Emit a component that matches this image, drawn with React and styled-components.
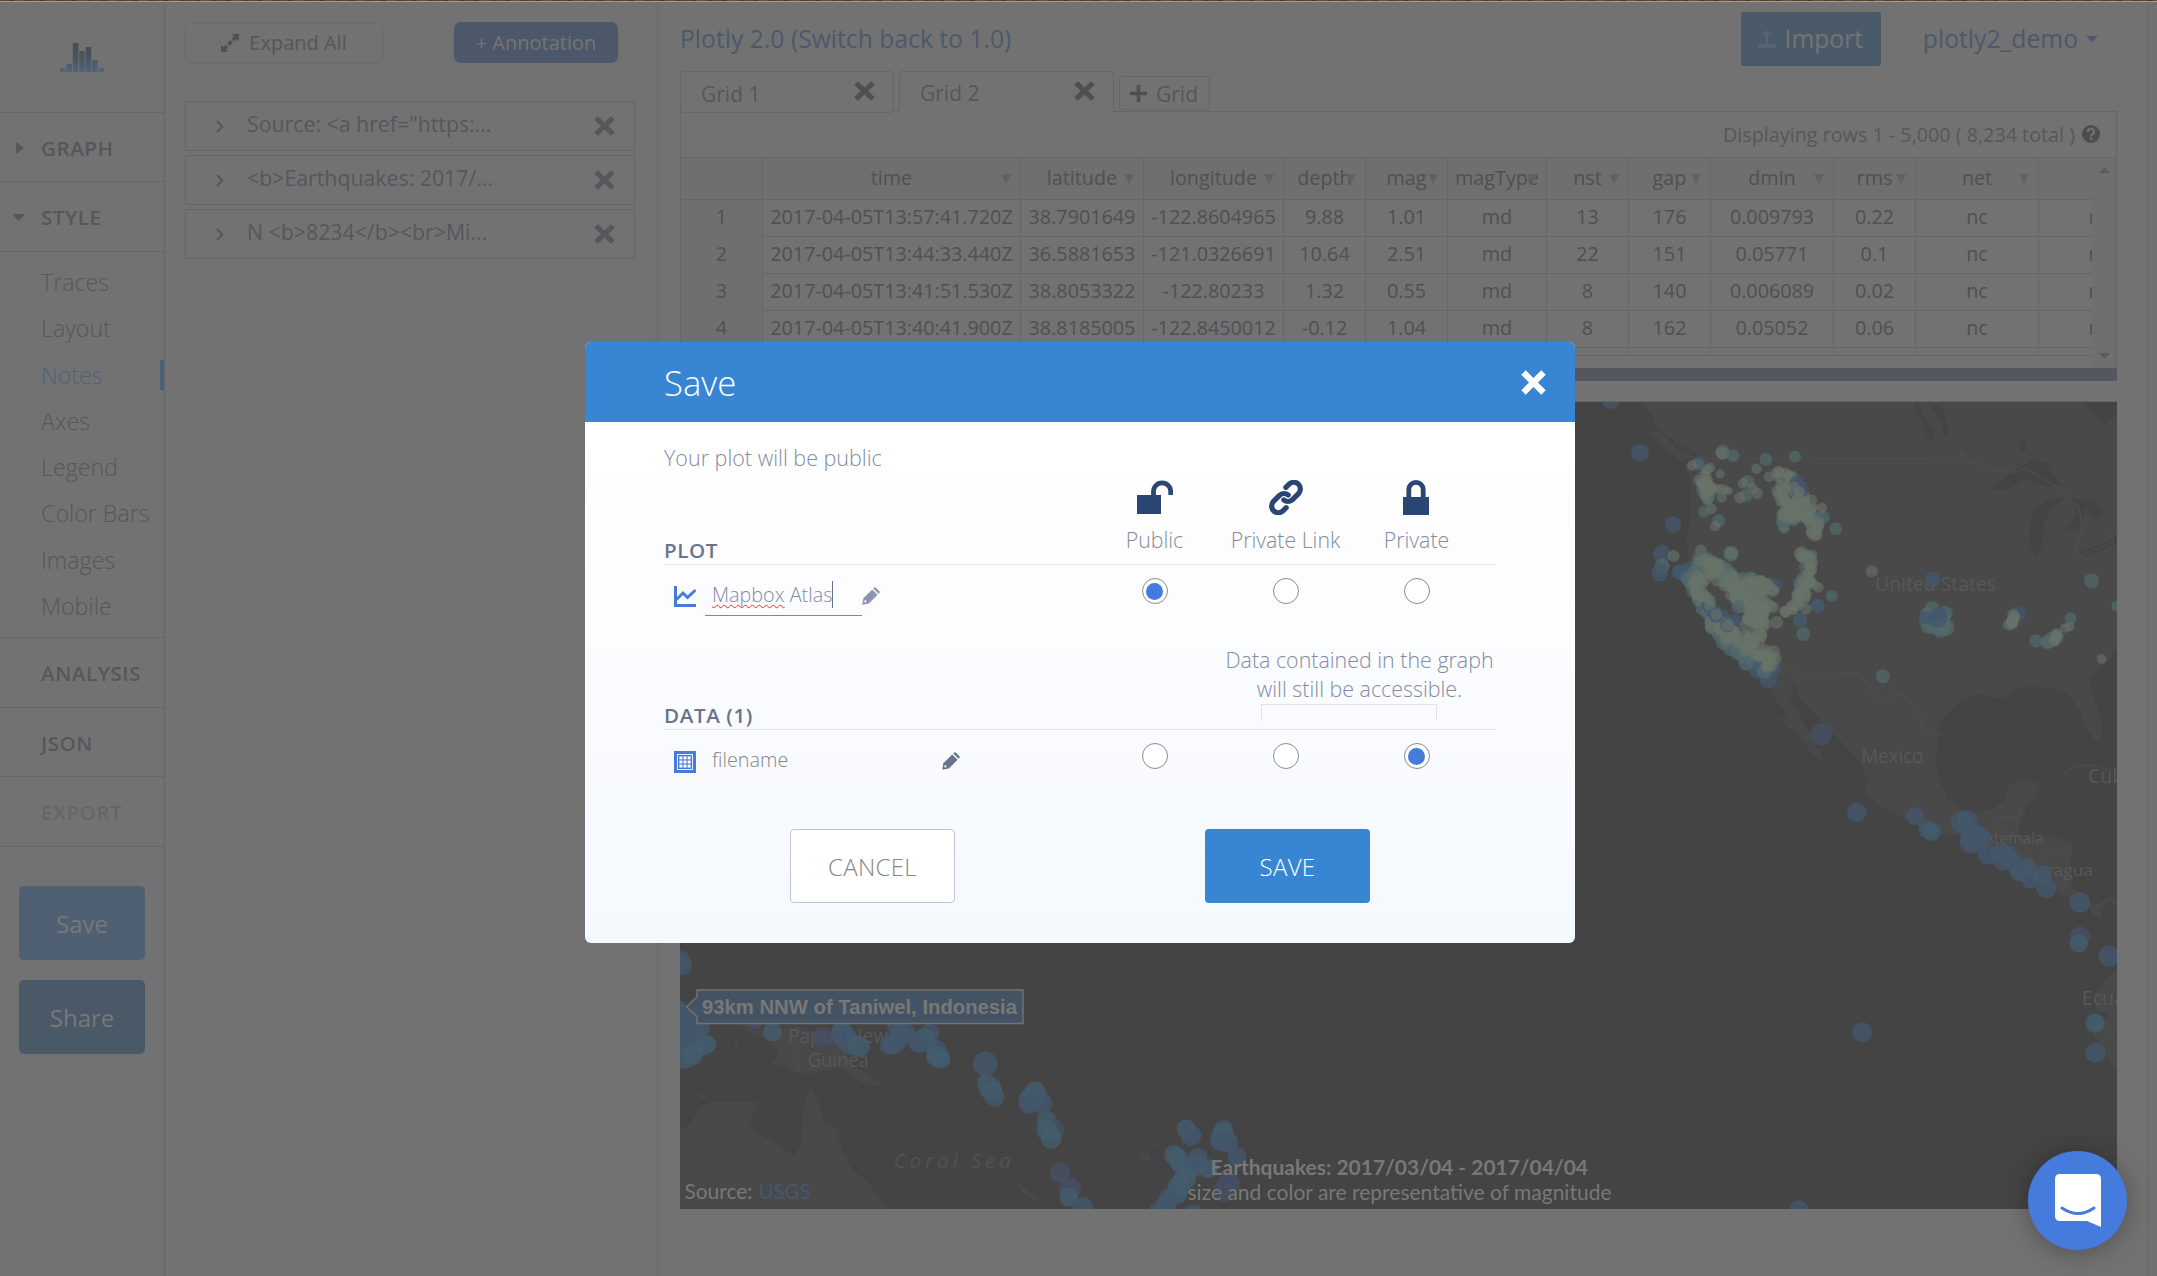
import React from "react";
import styled, { createGlobalStyle, css } from "styled-components";

const SANS = '"Open Sans", "Noto Sans", sans-serif';

const c = {
  page: "#727272",
  line: "#65666a",
  soft: "#686868",
  ink: "#55575c",
  text: "#4f5052",
  light: "#5c5d62",
  blueText: "#4b596b",
  water: "#444444",
  land: "#494949",
  modalBlue: "#3885d3",
  slate: "#69738c",
  slateLight: "#828ba3",
  navy: "#2a4675",
  icon: "#447bdc",
};

const GlobalStyle = createGlobalStyle`
  * { box-sizing: border-box; }
  html, body { margin: 0; padding: 0; }
  body { background: ${c.page}; font-family: ${SANS}; overflow: hidden; }
  button { font-family: inherit; padding: 0; border: 0; margin: 0; }
`;

/* ---------- shell ---------- */
const Page = styled.div`
  position: relative;
  width: 2157px;
  height: 1276px;
  overflow: hidden;
  background: ${c.page};
  display: flex;
  flex-direction: column;
`;
const TopStrip = styled.div`
  height: 2px;
  flex: none;
  background: repeating-linear-gradient(90deg, #5c4630 0 9px, #463522 9px 14px, #64503a 14px 25px, #4e3c29 25px 31px);
  border-bottom: 1px solid #a39a9a;
  && { box-sizing: border-box; }
`;
const Columns = styled.div`
  flex: 1;
  padding-top: 1px;
  display: grid;
  grid-template-columns: 165px 490px 5px 1487px 10px;
  min-height: 0;
`;

/* ---------- sidebar ---------- */
const Sidebar = styled.nav`
  border-right: 1px solid ${c.line};
  display: flex;
  flex-direction: column;
`;
const LogoBox = styled.div`
  height: 110px;
  padding: 40px 0 0 60px;
  border-bottom: 1px solid ${c.line};
`;
const Section = styled.div`
  height: ${(p) => p.$h}px;
  border-bottom: 1px solid ${c.line};
  padding: 1px 0 0 16px;
  display: flex;
  align-items: center;
  font-size: 20.6px;
  letter-spacing: 0.55px;
  font-weight: 600;
  color: ${(p) => (p.$muted ? "#65666b" : c.ink)};
`;
const Marker = styled.span`
  width: 25px;
  height: 14px;
  flex: none;
  display: flex;
  align-items: center;
  margin-left: ${(p) => (p.$down ? "-4px" : "0")};
  margin-right: ${(p) => (p.$down ? "4px" : "0")};
`;
const SubMenu = styled.div`
  height: 386px;
  padding-top: 7px;
  border-bottom: 1px solid ${c.line};
`;
const SubItem = styled.div`
  height: 46.25px;
  padding-left: 41px;
  display: flex;
  align-items: center;
  justify-content: space-between;
  font-size: 23.2px;
  font-weight: 300;
  white-space: nowrap;
  color: ${(p) => (p.$active ? "#50617a" : c.ink)};
`;
const ActiveBar = styled.span`
  width: 4px;
  height: 30px;
  background: #4c5f72;
`;
const SideActions = styled.div`
  padding: 39px 19px 0 19px;
  display: flex;
  flex-direction: column;
  gap: 20px;
`;
const SideButton = styled.button`
  height: 74px;
  border-radius: 5px;
  background: ${(p) => (p.$dark ? "#4a5968" : "#4e6071")};
  color: #777879;
  font-size: 24px;
`;

/* ---------- annotation panel ---------- */
const Panel = styled.section`
  padding: 19px 20px 0 20px;
`;
const PanelTop = styled.div`
  display: flex;
  justify-content: space-between;
  height: 41px;
  padding-right: 17px;
`;
const PanelButton = styled.button`
  width: ${(p) => p.$w}px;
  border-radius: 7px;
  font-size: 20px;
  display: flex;
  align-items: center;
  justify-content: center;
  gap: 10px;
  ${(p) =>
    p.$filled
      ? css`background: #4d576a; color: #747576;`
      : css`background: transparent; border: 1px solid #6c6c6c; color: #565656;`}
`;
const NoteList = styled.div`
  margin-top: 38px;
  display: flex;
  flex-direction: column;
  gap: 4px;
`;
const Note = styled.div`
  height: 50px;
  border: 1px solid ${c.line};
  padding: 0 19px 0 30px;
  display: flex;
  align-items: center;
  color: ${c.ink};
  font-size: 21.3px;
`;
const NoteText = styled.span`
  flex: 1;
  margin-left: 23px;
  padding-bottom: 6px;
  white-space: nowrap;
`;
const Gutter = styled.div`
  margin-top: -1px;
  background: #6e6e6e;
`;
const RightEdge = styled.div`
  border-left: 1px solid #676767;
  background: #707070;
`;

/* ---------- workspace ---------- */
const Workspace = styled.main`
  padding-left: 20px;
  padding-right: 30px;
  display: flex;
  flex-direction: column;
`;
const TitleBar = styled.header`
  height: 68px;
  flex: none;
  padding-right: 19px;
  display: flex;
  align-items: flex-start;
  color: ${c.blueText};
  font-size: 24.7px;
  line-height: 34px;
`;
const TitleText = styled.div`
  flex: 1;
  margin-top: 19px;
`;
const ImportButton = styled.button`
  margin-top: 9px;
  width: 140px;
  height: 54px;
  border-radius: 3px;
  background: #4a5a69;
  color: #737576;
  font-size: 24.7px;
  line-height: 34px;
  display: flex;
  align-items: center;
  justify-content: center;
  gap: 8px;
`;
const Account = styled.div`
  margin: 19px 0 0 42px;
  display: flex;
  align-items: center;
  gap: 8px;
`;
const Tabs = styled.div`
  height: 41px;
  flex: none;
  display: flex;
  color: #575757;
  font-size: 21px;
`;
const Tab = styled.div`
  width: ${(p) => p.$w}px;
  height: ${(p) => (p.$active ? 41 : 42)}px;
  border: 1px solid ${c.line};
  border-bottom-color: ${(p) => (p.$active ? c.page : c.line)};
  border-radius: ${(p) => (p.$active ? "4px 4px 0 0" : "4px")};
  margin-right: 5px;
  padding: 3px 18px 0 20px;
  display: flex;
  align-items: center;
  justify-content: space-between;
  background: ${c.page};
  z-index: 1;
`;
const CloseSlot = styled.span`
  display: flex;
  margin-top: -5px;
`;
const AddTab = styled.div`
  margin-top: 5px;
  width: 91px;
  height: 34px;
  border: 1px solid ${c.line};
  border-radius: 3px;
  padding: 1px 0 0 10px;
  display: flex;
  align-items: center;
  gap: 9px;
`;
const GridBox = styled.div`
  height: 257px;
  flex: none;
  margin-top: -1px;
  border: 1px solid ${c.line};
  border-bottom: 0;
  position: relative;
  display: flex;
  flex-direction: column;
`;
const GridInfo = styled.div`
  height: 46px;
  flex: none;
  border-bottom: 1px solid ${c.line};
  padding: 0 16px 1px 0;
  display: flex;
  align-items: center;
  justify-content: flex-end;
  gap: 7px;
  font-size: 19.75px;
  color: #575757;
`;
const GridScroll = styled.div`
  flex: 1;
  display: flex;
`;
const Cells = styled.div`
  width: 1411px;
  height: 198px;
  overflow: hidden;
  border-bottom: 1px solid ${c.line};
`;
const Row = styled.div`
  display: grid;
  grid-template-columns: 82px 258px 123px 140px 82px 82px 99px 82px 82px 123px 82px 123px 53px;
  height: ${(p) => (p.$head ? 42 : 37)}px;
  ${(p) => p.$head && css`background: #6f6f6f;`}
`;
const Cell = styled.div`
  position: relative;
  border-right: 1px solid ${c.line};
  border-bottom: 1px solid ${c.line};
  display: flex;
  align-items: center;
  justify-content: center;
  font-size: 19.75px;
  color: ${c.text};
  white-space: nowrap;
  overflow: hidden;
  padding-bottom: ${(p) => (p.$head ? 2 : 3)}px;
  &:first-child { background: #6f6f6f; ${(p) => !p.$head && css`border-bottom-color: #6f6f6f;`} }
  &:last-child { border-right: 0; justify-content: flex-start; padding-left: 49.5px; }
`;
const SortMark = styled.svg`
  position: absolute;
  right: 9px;
  top: 16px;
`;
const ScrollTrack = styled.div`
  flex: 1;
  background: #6f6f6f;
  display: flex;
  flex-direction: column;
  justify-content: space-between;
  align-items: center;
  padding: 9px 0 9px;
`;
const Divider = styled.div`
  height: 13px;
  flex: none;
  background: #545760;
`;
const MapFrame = styled.div`
  margin-top: 20px;
  height: 808px;
  flex: none;
  border-top: 1px solid #656565;
`;

/* ---------- modal ---------- */
const Modal = styled.div`
  position: absolute;
  left: 585px;
  top: 342px;
  width: 990px;
  height: 601px;
  border-radius: 6px;
  overflow: hidden;
  background: linear-gradient(#ffffff 80px, #fdfdfe 220px, #f4f9fe);
  color: ${c.slateLight};
  font-weight: 300;
`;
const ModalHead = styled.div`
  height: 80px;
  padding: 0 29px 0 79px;
  background: ${c.modalBlue};
  color: #fff;
  font-size: 34.7px;
  display: flex;
  align-items: center;
  justify-content: space-between;
`;
const ModalBody = styled.div`
  padding: 21px 79px 0;
  font-size: 21.5px;
`;
const Intro = styled.div`
  height: 30px;
  line-height: 30px;
`;
const GroupHead = styled.div`
  height: ${(p) => p.$h}px;
  border-bottom: 1px solid #e2e5e9;
  display: flex;
  align-items: flex-end;
`;
const GroupTitle = styled.div`
  flex: 1;
  height: 28px;
  line-height: 28px;
  font-size: 20.6px;
  letter-spacing: 0.6px;
  font-weight: 600;
  color: ${c.slate};
`;
const Options = styled.div`
  display: grid;
  grid-template-columns: repeat(3, 131px);
  justify-items: center;
  padding-right: 14px;
`;
const Option = styled.div`
  height: 92px;
  padding-top: 8px;
  display: flex;
  flex-direction: column;
  align-items: center;
  gap: 10px;
  line-height: 30px;
  font-size: 21.3px;
  white-space: nowrap;
`;
const ItemRow = styled.div`
  height: ${(p) => p.$h}px;
  display: flex;
  align-items: flex-start;
  padding-left: 10px;
`;
const IconSlot = styled.div`
  padding-top: 21px;
  width: 31px;
  display: flex;
`;
const NameField = styled.div`
  width: ${(p) => p.$w}px;
  height: 51px;
  padding: 15px 0 0 7px;
  line-height: 30px;
  font-size: 19.8px;
  border-bottom: 1px solid ${(p) => (p.$editing ? "#7d88a8" : "transparent")};
  color: ${(p) => (p.$editing ? c.slateLight : "#858585")};
  display: flex;
  white-space: pre;
`;
const Misspelt = styled.span`
  text-decoration: underline wavy #ff2a2a 1px;
  text-decoration-skip-ink: none;
  text-underline-offset: 2px;
`;
const Caret = styled.span`
  width: 1px;
  height: 27px;
  margin-top: 1px;
  background: ${c.slate};
`;
const Pencil = styled.svg`
  margin-top: 22px;
  flex: none;
`;
const RadioGroup = styled(Options)`
  margin-left: auto;
  padding-top: 13px;
`;
const Radio = styled.span`
  width: 26px;
  height: 26px;
  border-radius: 50%;
  border: 1px solid #8b8b8b;
  background: #fff;
  display: flex;
  align-items: center;
  justify-content: center;
  &::after {
    content: "";
    width: 17px;
    height: 17px;
    border-radius: 50%;
    background: ${(p) => (p.$on ? c.icon : "transparent")};
  }
`;
const Notice = styled.div`
  width: 273px;
  height: 84px;
  line-height: 29.3px;
  font-size: 21.4px;
  text-align: center;
  white-space: nowrap;
`;
const Bracket = styled.div`
  width: 176px;
  height: 17px;
  margin-left: 38px;
  border: 1px solid #dfe3e6;
  border-bottom: 0;
`;
const Footer = styled.div`
  margin-top: 47px;
  padding: 0 126px;
  display: flex;
  justify-content: space-between;
`;
const ModalButton = styled.button`
  width: 165px;
  height: 74px;
  border-radius: 4px;
  font-size: 24px;
  letter-spacing: 0.3px;
  font-weight: 300;
  background: ${(p) => (p.$primary ? c.modalBlue : "#fff")};
  color: ${(p) => (p.$primary ? "#fff" : "#858585")};
  border: ${(p) => (p.$primary ? "0" : "1px solid #c2c4cf")};
`;
const Messenger = styled.div`
  position: absolute;
  left: 2028px;
  top: 1151px;
  width: 99px;
  height: 99px;
  border-radius: 50%;
  background: #457bdd;
  box-shadow: 0 2px 24px rgba(0, 0, 0, 0.3);
  display: flex;
  align-items: center;
  justify-content: center;
`;

/* ---------- small drawings ---------- */
const Cross = ({ w = 21, h = 20, color = c.ink, t = 5 }) => (
  <svg width={w} height={h} viewBox="0 0 20 20" preserveAspectRatio="none">
    <path d="M2 2 18 18M18 2 2 18" stroke={color} strokeWidth={t} />
  </svg>
);
const Tri = ({ dir, w, h, color }) => (
  <svg width={w} height={h} viewBox="0 0 10 10" preserveAspectRatio="none">
    <path d={dir === "down" ? "M0 0H10L5 10Z" : dir === "up" ? "M0 10H10L5 0Z" : "M0 0V10L10 5Z"} fill={color} />
  </svg>
);
const Logo = () => (
  <svg width="44" height="29" viewBox="0 0 44 29">
    <defs>
      <linearGradient id="lg" x1="0" y1="0" x2="0" y2="29" gradientUnits="userSpaceOnUse">
        <stop offset="0" stopColor="#484c54" />
        <stop offset="0.5" stopColor="#4b535e" />
        <stop offset="1" stopColor="#506679" />
      </linearGradient>
    </defs>
    {[[0, 4], [6.4, 8], [12.8, 29], [19.2, 21], [25.6, 25], [32, 12], [38.4, 4]].map(([x, h]) => (
      <rect key={x} x={x} y={29 - h} width="5.6" height={h} fill="url(#lg)" />
    ))}
  </svg>
);
const Expand = () => (
  <svg width="18" height="18" viewBox="0 0 18 18" fill="#515151">
    <path d="M10.8 0H18V7.2L15.8 5 13.4 7.4 10.6 4.6 13 2.2ZM7.2 18H0V10.8L2.2 13 4.6 10.6 7.4 13.4 5 15.8Z" />
    <path d="M6 9.3 9.3 6 12 8.7 8.7 12Z" />
  </svg>
);
const Unlocked = () => (
  <svg width="36" height="35" viewBox="0 0 36 35">
    <path d="M0 15H24V34H0Z" fill={c.navy} />
    <path d="M16.5 16V11.5A8.6 8.6 0 0 1 33.7 11.5V15" fill="none" stroke={c.navy} strokeWidth="4.8" />
  </svg>
);
const Locked = () => (
  <svg width="26" height="35" viewBox="0 0 26 35">
    <path d="M0 17H26V35H0Z" fill={c.navy} />
    <path d="M5.8 18V9.6A7.2 7.2 0 0 1 20.2 9.6V18" fill="none" stroke={c.navy} strokeWidth="4.8" />
  </svg>
);
const Chain = () => (
  <svg width="34" height="35" viewBox="448 45 101 105" fill="none" strokeLinecap="round">
    <path d="M499 128 490 137A19.5 19.5 0 0 1 461 109L479 91A19.5 19.5 0 0 1 505 90" stroke={c.navy} strokeWidth="15.5" />
    <path d="M518 104A19.5 19.5 0 0 1 492 105" stroke="#fff" strokeWidth="21" strokeLinecap="butt" />
    <path d="M498 67 507 58A19.5 19.5 0 0 1 536 86L518 104A19.5 19.5 0 0 1 492 105" stroke={c.navy} strokeWidth="15.5" />
  </svg>
);
const PencilIcon = ({ color }) => (
  <Pencil width="18" height="18" viewBox="0 0 18 18">
    <path d="M1.4 11.2 10.2 2.4 15.6 7.8 6.8 16.6 0.3 17.7Z" fill={color} />
    <path d="M11.2 1.4 12.2 0.5Q13 -0.2 13.8 0.5L17.5 4.2Q18.2 5 17.5 5.8L16.6 6.8Z" fill={color} />
    <circle cx="3.4" cy="14.4" r="1.1" fill="#fff" />
  </Pencil>
);
const ChartIcon = () => (
  <svg width="22" height="22" viewBox="0 0 22 22">
    <path d="M1.5 0V19.5H22" fill="none" stroke={c.icon} strokeWidth="3" />
    <path d="M2.5 13.5 9 7 13.5 11.5 21.5 4" fill="none" stroke={c.icon} strokeWidth="2.8" />
  </svg>
);
const TableIcon = () => (
  <svg width="22" height="22" viewBox="0 0 22 22">
    <rect width="22" height="22" fill={c.icon} />
    <rect x="3.5" y="3.5" width="15" height="15" fill="none" stroke="#e8effb" />
    {[5.4, 9.5, 13.6].map((y) => [5.4, 9.5, 13.6].map((x) => <rect key={x + "-" + y} x={x} y={y} width="3" height="3" fill="#fff" />))}
  </svg>
);
const HelpIcon = () => (
  <svg width="18" height="18" viewBox="0 0 18 18">
    <circle cx="9" cy="9" r="9" fill="#4d4d4d" />
    <path d="M6 7A3 2.9 0 1 1 10.3 9.2Q9.1 9.8 9.1 11.2" fill="none" stroke={c.page} strokeWidth="2.2" />
    <rect x="7.9" y="12.4" width="2.4" height="2.3" fill={c.page} />
  </svg>
);

/* ---------- map ---------- */
/* the coastline and quake data are digitised in two panes with different horizontal density */
const panes = {
  east: { x0: 1570, y0: 390, sx: 2.671, sy: 3 },
  west: { x0: 660, y0: 930, sx: 2.613, sy: 3 },
};
const paneTransform = (k) => {
  const p = panes[k];
  return `translate(${p.x0} ${p.y0}) scale(${1 / p.sx} ${1 / p.sy})`;
};
const tones = { b: "#43586c", t: "#52696b", g: "#677269", p: "#464f64", u: "#435d6d" };
const alphas = { b: 0.8, t: 0.72, g: 0.62, p: 0.85, u: 0.78 };

let seed = 7;
const rnd = () => ((seed = (seed * 16807) % 2147483647) / 2147483647);
const along = (pts, n, spread, tone, r) => {
  const out = [];
  for (let i = 0; i < n; i++) {
    const t = (i / Math.max(1, n - 1)) * (pts.length - 1);
    const k = Math.min(pts.length - 2, Math.floor(t));
    const f = t - k;
    out.push([
      pts[k][0] + (pts[k + 1][0] - pts[k][0]) * f + (rnd() - 0.5) * 2 * spread,
      pts[k][1] + (pts[k + 1][1] - pts[k][1]) * f + (rnd() - 0.5) * 2 * spread,
      tone,
      r,
    ]);
  }
  return out;
};

const eastQuakes = [
  [109, 30, "b", 24], [187, 189, "b", 24], [275, 403, "b", 22], [247, 492, "b", 24], [246, 528, "t", 20], [240, 550, "b", 22], [277, 498, "g", 16],
  [292, 546, "b", 21], [303, 549, "b", 23], [322, 537, "b", 22], [310, 562, "u", 18],
  [408, 186, "t", 20], [407, 190, "g", 17], [436, 197, "t", 17], [523, 208, "t", 17], [601, 200, "t", 16], [498, 236, "g", 14], [345, 220, "b", 18], [342, 222, "t", 15], [326, 226, "g", 14],
  [401, 252, "g", 12], [360, 310, "b", 19], [358, 365, "t", 16], [397, 392, "t", 17], [388, 408, "g", 14], [378, 357, "g", 14],
  [475, 274, "t", 17], [462, 280, "g", 14], [488, 295, "g", 14], [470, 316, "t", 18], [453, 323, "g", 15], [500, 310, "g", 15], [424, 303, "g", 11], [405, 322, "g", 14],
  [710, 416, "t", 17], [675, 382, "t", 18], [673, 353, "g", 14], [571, 408, "u", 17], [572, 415, "g", 14], [654, 436, "g", 17],
  [430, 491, "t", 21], [431, 490, "g", 17], [350, 482, "g", 16],
  [699, 618, "t", 16], [661, 647, "u", 19], [615, 690, "u", 19], [623, 732, "t", 19],
  [806, 544, "g", 16], [968, 569, "b", 21], [1393, 572, "t", 20], [1461, 648, "t", 15], [1245, 753, "t", 18], [1337, 685, "t", 16], [1420, 807, "g", 13], [836, 859, "t", 19],
  [1197, 671, "b", 20], [671, 1033, "p", 29], [766, 1267, "b", 26], [921, 1278, "b", 24], [955, 1318, "b", 25], [966, 1326, "u", 24],
  [1045, 1298, "b", 29], [1060, 1292, "b", 28], [1078, 1344, "b", 36], [1070, 1358, "b", 29], [1098, 1340, "b", 26],
  [1116, 1394, "b", 27], [1150, 1392, "b", 27], [1168, 1396, "b", 26], [1155, 1412, "b", 26], [1184, 1418, "b", 26], [1205, 1440, "b", 25], [1222, 1430, "b", 24], [1200, 1446, "b", 25],
  [1230, 1468, "b", 25], [1262, 1454, "b", 26], [1272, 1494, "b", 27], [1362, 1537, "b", 28], [1362, 1640, "p", 27], [1359, 1660, "u", 25], [1440, 1698, "b", 28], [1478, 1614, "b", 20],
  [1402, 1900, "b", 26], [1403, 1898, "u", 24], [1403, 1988, "b", 27], [780, 1927, "b", 27], [611, 2460, "b", 26],
  ...along([[365, 290], [365, 320]], 6, 10, "t", 18),
  ...along([[365, 240], [350, 280], [368, 290], [362, 325]], 22, 14, "g", 14),
  ...along([[375, 295], [410, 300]], 5, 6, "g", 13),
  [571, 308, "t", 20],
  ...along([[600, 320], [610, 350], [575, 395], [660, 385]], 14, 14, "t", 18),
  ...along([[540, 250], [575, 255], [600, 280], [620, 320], [640, 345]], 26, 12, "g", 14),
  [605, 280, "b", 20], [613, 298, "b", 24], [598, 290, "g", 14],
  ...along([[555, 280], [565, 330], [580, 340], [565, 385], [640, 385], [655, 400], [655, 440]], 34, 11, "g", 15),
  ...along([[625, 320], [600, 360], [640, 380]], 20, 16, "g", 15),
  ...along([[620, 570], [610, 640], [630, 495]], 10, 12, "t", 18),
  ...along([[610, 490], [640, 500], [635, 560], [630, 600], [600, 640], [580, 670]], 38, 11, "g", 15),
  ...along([[620, 570], [660, 590]], 5, 6, "g", 14), [630, 657, "g", 15], [552, 697, "g", 17],
  ...along([[340, 515], [325, 570], [340, 600], [365, 650], [395, 710], [415, 750], [470, 800], [520, 830]], 60, 11, "t", 20),
  ...along([[390, 520], [430, 560], [520, 590], [520, 690]], 24, 16, "t", 19),
  ...along([[340, 600], [390, 675], [420, 705]], 8, 8, "b", 21),
  [547, 587, "b", 20], [527, 588, "u", 20], [440, 690, "b", 17],
  [500, 838, "b", 24], [530, 868, "b", 24], [545, 835, "b", 20], [470, 820, "t", 20], [519, 845, "t", 20],
  ...along([[350, 515], [395, 530], [350, 560], [335, 600], [370, 640]], 44, 14, "g", 15),
  ...along([[410, 560], [440, 600], [490, 590], [540, 590]], 44, 18, "g", 16),
  ...along([[440, 590], [470, 640], [530, 650], [480, 690], [520, 700]], 70, 20, "g", 15),
  ...along([[385, 710], [420, 710], [430, 745], [500, 745], [470, 780], [540, 800], [520, 825]], 70, 15, "g", 16),
  [450, 650, "t", 18], [420, 706, "b", 19], [391, 676, "b", 20], [422, 706, "g", 16], [391, 673, "g", 15],
  ...along([[965, 665], [960, 700], [1000, 710], [985, 665]], 20, 14, "t", 20), [950, 683, "b", 18], [985, 675, "b", 22], [1003, 712, "t", 24], [982, 685, "b", 26],
  ...along([[1186, 678], [1177, 703]], 7, 4, "g", 16),
  ...along([[1278, 757], [1302, 735]], 8, 5, "t", 18), ...along([[1290, 752], [1302, 730]], 4, 3, "g", 14), [1322, 714, "g", 13], [1335, 710, "g", 13],
];
const westQuakes = [
  [55, 90, "b", 24], [58, 106, "b", 26], [50, 235, "b", 20],
  ...along([[55, 240], [70, 290], [100, 300], [65, 330], [75, 360], [55, 385]], 22, 12, "b", 26), [112, 345, "b", 28], [122, 343, "u", 25], [84, 374, "u", 28],
  [245, 268, "p", 26], [294, 306, "u", 25], [423, 321, "p", 26], [475, 306, "u", 28], [480, 320, "b", 30], [500, 342, "b", 29], [520, 350, "u", 28],
  [610, 340, "b", 28], [600, 346, "b", 26], [625, 322, "b", 28], [640, 308, "b", 26], [615, 285, "b", 22], [705, 310, "b", 25], [690, 330, "u", 30], [676, 338, "b", 27], [722, 360, "b", 26], [728, 382, "b", 28], [735, 388, "u", 24], [720, 378, "u", 26],
  [850, 401, "b", 32], [853, 460, "u", 25], [862, 474, "b", 30], [868, 486, "u", 27], [875, 502, "b", 25],
  [980, 486, "u", 28], [968, 508, "u", 30], [964, 520, "b", 27], [998, 520, "b", 27], [985, 500, "b", 26], [1010, 570, "u", 25], [1028, 600, "p", 28], [1010, 600, "u", 27], [1022, 626, "u", 27],
  [1045, 727, "p", 27], [1072, 776, "p", 28], [1068, 802, "u", 25], [1104, 832, "b", 27],
  [1375, 597, "u", 25], [1388, 617, "b", 27], [1473, 600, "u", 25], [1470, 615, "u", 29], [1466, 632, "b", 28], [1482, 636, "b", 28], [1508, 680, "b", 25],
  [1342, 674, "u", 25], [1350, 680, "u", 26], [1405, 682, "b", 25], [1360, 700, "u", 27], [1378, 720, "u", 28], [1400, 706, "b", 28], [1433, 716, "u", 25], [1372, 745, "u", 29], [1356, 770, "u", 29], [1350, 790, "u", 28], [1330, 806, "b", 27], [1320, 830, "b", 28], [1300, 845, "b", 24], [1396, 850, "b", 24],
  [1487, 760, "p", 29], [1474, 782, "p", 29],
];
const Quakes = ({ data, pane }) => {
  const p = panes[pane];
  return data.map(([x, y, tone, r], i) => (
    <circle key={i} cx={p.x0 + x / p.sx} cy={p.y0 + y / p.sy} r={r / p.sx} fill={tones[tone]} fillOpacity={alphas[tone]} />
  ));
};
const MapText = styled.text`
  font-family: ${SANS};
  fill: ${(p) => p.$fill || "#585858"};
`;
const Caption = styled.text`
  font-family: Lato, "Open Sans", sans-serif;
  fill: ${(p) => p.$fill || "#787878"};
`;

const MapSvg = styled.svg`
  display: block;
`;

const EarthquakeMap = () => (
  <MapSvg width="1437" height="807" viewBox="680 402 1437 807">
    <rect x="680" y="402" width="1437" height="807" fill={c.water} />
    <g transform={paneTransform("east")}>
      <path
        fill={c.land}
        d="M190 36L220 80 225 110 255 130 300 180 330 220 303 228 320 260 325 320 322 390 310 450 320 520 350 620 390 740 450 800 520 860 550 890 530 897 545 925 575 965 590 995 550 975 590 1020 618 1040 640 1085 685 1122 660 1075 640 1030 600 950 585 920 590 925 597 870 615 930 660 980 720 1050 770 1110 797 1175 785 1205 830 1250 900 1290 960 1330 1010 1342 1050 1330 1100 1360 1150 1400 1200 1440 1250 1480 1300 1500 1345 1540 1390 1560 1405 1582 1420 1580 1412 1555 1440 1535 1461 1545 1461 1525 1440 1522 1400 1548 1370 1525 1340 1490 1335 1420 1345 1362 1300 1340 1250 1345 1195 1330 1210 1262 1240 1220 1253 1180 1210 1170 1170 1185 1160 1230 1130 1260 1060 1265 1010 1230 985 1170 978 1130 982 1040 990 990 1050 925 1100 912 1140 925 1170 920 1180 900 1230 890 1290 895 1330 910 1360 960 1375 1010 1405 1055 1420 1040 1415 970 1390 900 1390 860 1430 820 1461 780 1461 36Z"
      />
      <path fill={c.land} d="M210 125L240 125 275 165 320 205 300 215 250 175Z" />
      <path fill={c.land} d="M1461 1740L1425 1775 1403 1810 1405 1865 1440 1870 1395 1935 1420 1970 1461 2050ZM1140 1790L1150 1805 1142 1820Z" />
      <path fill="none" stroke={c.land} strokeWidth="8" d="M1316 1156L1340 1130 1390 1124 1440 1142 1461 1152" />
      <g fill={c.water}>
        <path d="M1122 302L1160 262 1230 213 1275 215 1290 250 1310 285 1296 292 1240 285 1220 265 1170 297Z" />
        <path d="M1245 502L1228 470 1226 420 1240 365 1270 330 1320 325 1290 352 1268 390 1262 470Z" />
        <path d="M1330 322L1400 332 1427 370 1405 388 1380 350 1366 400 1350 420 1327 418 1352 365Z" />
        <path d="M1345 495L1400 470 1461 440 1461 458 1390 497Z" />
        <path d="M918 36L932 36 945 85 972 125 966 152 955 145 940 90 925 75ZM962 45L990 45 1012 110 1003 145 990 95Z" />
        <path d="M1375 36H1461V70L1428 106 1400 75Z" />
        <path d="M1200 155L1215 150 1222 175 1210 187 1198 178ZM1042 245L1057 238 1048 252ZM290 155L345 195 335 205 300 175Z" />
      </g>
      <g fill="none" stroke="#505050" strokeWidth="3">
        <path d="M345 204L1042 206 1046 188 1060 216 1110 225 1130 240 1190 247 1215 234 1300 290 1330 325 1360 355 1370 420 1345 490 1365 498 1420 470 1450 455 1445 430 1461 422" />
        <path d="M565 828L640 860 718 860 718 847 762 847 800 885 808 915 843 938 862 910 885 910 905 930 935 980 937 1000 950 1020 992 1037" />
        <path d="M1215 1262L1196 1280 1150 1280 1140 1298 1165 1330M1196 1280V1330M1190 1375L1228 1405M1345 1362L1300 1385 1260 1400 1248 1425M1295 1480L1333 1492M1425 1915L1445 1935 1461 1915" />
      </g>
    </g>
    <g transform={paneTransform("west")} fill={c.land}>
      <path d="M52 600L80 580 95 545 130 515 190 515 255 515 235 570 245 605 310 645 350 678 370 640 375 540 385 490 398 480 415 520 425 580 460 595 475 660 500 715 545 760 570 800 600 837 52 837Z" />
      <path d="M170 260L240 300 300 300 360 290 470 330 500 400 540 430 592 470 530 458 470 410 410 430 360 430 330 405 285 405 310 380 300 340 215 295Z" />
      <path d="M930 755L960 780 995 812 975 808 945 785ZM1252 675L1280 672 1280 690 1262 694ZM1285 650L1310 637 1305 652ZM95 492L125 495 110 507ZM195 335L206 330 200 362Z" />
      <path d="M361 290V430" stroke="#505050" strokeWidth="2.5" />
    </g>
    <g fontWeight="500">
      <MapText x="788" y="1042.7" fontSize="19.5" textLength="100" lengthAdjust="spacingAndGlyphs">Papua New</MapText>
      <MapText x="807.7" y="1067.3" fontSize="19.5" textLength="61" lengthAdjust="spacingAndGlyphs">Guinea</MapText>
      <MapText x="893.8" y="1168.3" fontSize="20.5" fontStyle="italic" textLength="117" $fill="#525252">Coral Sea</MapText>
      <MapText x="1875" y="591" fontSize="19.5" textLength="121" lengthAdjust="spacingAndGlyphs">United States</MapText>
      <MapText x="1861.3" y="762.7" fontSize="19.5" textLength="62" lengthAdjust="spacingAndGlyphs">Mexico</MapText>
      <MapText x="2088" y="783" fontSize="19.5">Cuba</MapText>
      <MapText x="1964" y="844.3" fontSize="15.5" textLength="80" lengthAdjust="spacingAndGlyphs">Guatemala</MapText>
      <MapText x="2011" y="876.3" fontSize="15.5" textLength="82" lengthAdjust="spacingAndGlyphs">Nicaragua</MapText>
      <MapText x="2081.8" y="1004.7" fontSize="19.5">Ecuador</MapText>
    </g>
    <Quakes data={eastQuakes} pane="east" />
    <Quakes data={westQuakes} pane="west" />
    <path d="M686.5 1006.7L697 997V990H1023V1023.5H697V1016.5Z" fill="#435363" stroke="#747474" strokeWidth="1.4" />
    <text x="702" y="1013.5" fontFamily='"Liberation Sans", Arial, sans-serif' fontSize="20" fontWeight="700" fill="#787878" textLength="315" lengthAdjust="spacingAndGlyphs">93km NNW of Taniwel, Indonesia</text>
    <Caption x="684.5" y="1198.7" fontSize="21" textLength="68" lengthAdjust="spacingAndGlyphs">Source:</Caption>
    <Caption x="758.5" y="1198.7" fontSize="21" textLength="52" lengthAdjust="spacingAndGlyphs" $fill="#485670">USGS</Caption>
    <Caption x="1210.5" y="1175" fontSize="20.5" fontWeight="700" textLength="377.5" lengthAdjust="spacingAndGlyphs">Earthquakes: 2017/03/04 - 2017/04/04</Caption>
    <Caption x="1187.5" y="1200" fontSize="20.5" textLength="424" lengthAdjust="spacingAndGlyphs">size and color are representative of magnitude</Caption>
  </MapSvg>
);

/* ---------- data ---------- */
const subItems = ["Traces", "Layout", "Notes", "Axes", "Legend", "Color Bars", "Images", "Mobile"];
const notes = ['Source: <a href="https:...', "<b>Earthquakes: 2017/...", "N <b>8234</b><br>Mi..."];
const header = ["", "time", "latitude", "longitude", "depth", "mag", "magType", "nst", "gap", "dmin", "rms", "net", ""];
const rows = [
  ["1", "2017-04-05T13:57:41.720Z", "38.7901649", "-122.8604965", "9.88", "1.01", "md", "13", "176", "0.009793", "0.22", "nc", "n"],
  ["2", "2017-04-05T13:44:33.440Z", "36.5881653", "-121.0326691", "10.64", "2.51", "md", "22", "151", "0.05771", "0.1", "nc", "n"],
  ["3", "2017-04-05T13:41:51.530Z", "38.8053322", "-122.80233", "1.32", "0.55", "md", "8", "140", "0.006089", "0.02", "nc", "n"],
  ["4", "2017-04-05T13:40:41.900Z", "38.8185005", "-122.8450012", "-0.12", "1.04", "md", "8", "162", "0.05052", "0.06", "nc", "n"],
  ["", "", "", "", "", "", "", "", "", "", "", "", ""],
];

export default function App() {
  return (
    <Page>
      <GlobalStyle />
      <TopStrip />
      <Columns>
        <Sidebar>
          <LogoBox><Logo /></LogoBox>
          <Section $h={69}><Marker><Tri dir="right" w={8} h={12} color={c.ink} /></Marker>GRAPH</Section>
          <Section $h={70}><Marker $down><Tri dir="down" w={13} h={7} color={c.ink} /></Marker>STYLE</Section>
          <SubMenu>
            {subItems.map((s) => (
              <SubItem key={s} $active={s === "Notes"}>{s}{s === "Notes" && <ActiveBar />}</SubItem>
            ))}
          </SubMenu>
          <Section $h={70}><Marker />ANALYSIS</Section>
          <Section $h={69}><Marker />JSON</Section>
          <Section $h={70} $muted><Marker />EXPORT</Section>
          <SideActions>
            <SideButton>Save</SideButton>
            <SideButton $dark>Share</SideButton>
          </SideActions>
        </Sidebar>

        <Panel>
          <PanelTop>
            <PanelButton $w={198}><Expand />Expand All</PanelButton>
            <PanelButton $w={164} $filled>+ Annotation</PanelButton>
          </PanelTop>
          <NoteList>
            {notes.map((n) => (
              <Note key={n}>
                <svg width="8" height="13" viewBox="0 0 8 13"><path d="M1 1 6.3 6.5 1 12" fill="none" stroke={c.ink} strokeWidth="2" /></svg>
                <NoteText>{n}</NoteText>
                <Cross />
              </Note>
            ))}
          </NoteList>
        </Panel>

        <Gutter />

        <Workspace>
          <TitleBar>
            <TitleText>Plotly 2.0 (Switch back to 1.0)</TitleText>
            <ImportButton>
              <svg width="18" height="18" viewBox="0 0 18 18"><path d="M0 13.5H18V18H0Z" fill="#546575" /><path d="M9 13V2M5 5.6 9 1.6 13 5.6" fill="none" stroke="#546575" strokeWidth="2" /></svg>
              Import
            </ImportButton>
            <Account>plotly2_demo <Tri dir="down" w={12} h={6} color={c.blueText} /></Account>
          </TitleBar>
          <Tabs>
            <Tab $w={214}>Grid 1<CloseSlot><Cross w={21} color="#4f4f4f" /></CloseSlot></Tab>
            <Tab $w={215} $active>Grid 2<CloseSlot><Cross w={21} color="#4f4f4f" /></CloseSlot></Tab>
            <AddTab>
              <svg width="17" height="17" viewBox="0 0 17 17"><path d="M8.5 0V17M0 8.5H17" stroke="#4f4f4f" strokeWidth="3.6" /></svg>
              Grid
            </AddTab>
          </Tabs>
          <GridBox>
            <GridInfo>Displaying rows 1 - 5,000 ( 8,234 total ) <HelpIcon /></GridInfo>
            <GridScroll>
              <Cells>
                <Row $head>
                  {header.map((h, i) => (
                    <Cell key={i} $head>{h}{h && <SortMark width="10" height="10" viewBox="0 0 10 10"><path d="M0 0H10L5 10Z" fill="#616161" /></SortMark>}</Cell>
                  ))}
                </Row>
                {rows.map((r, i) => (
                  <Row key={i}>{r.map((v, j) => <Cell key={j}>{v}</Cell>)}</Row>
                ))}
              </Cells>
              <ScrollTrack>
                <Tri dir="up" w={11} h={6} color="#5c5c5c" />
                <Tri dir="down" w={11} h={6} color="#5c5c5c" />
              </ScrollTrack>
            </GridScroll>
          </GridBox>
          <Divider />
          <MapFrame><EarthquakeMap /></MapFrame>
        </Workspace>
        <RightEdge />
      </Columns>

      <Modal>
        <ModalHead>Save<Cross w={25} h={25} color="#fff" t={5} /></ModalHead>
        <ModalBody>
          <Intro>Your plot will be public</Intro>
          <GroupHead $h={92}>
            <GroupTitle>PLOT</GroupTitle>
            <Options>
              <Option><Unlocked />Public</Option>
              <Option><Chain />Private Link</Option>
              <Option><Locked />Private</Option>
            </Options>
          </GroupHead>
          <ItemRow $h={80}>
            <IconSlot><ChartIcon /></IconSlot>
            <NameField $w={157} $editing><Misspelt>Mapbox</Misspelt> Atlas<Caret /></NameField>
            <PencilIcon color="#8b95b2" />
            <RadioGroup><Radio $on /><Radio /><Radio /></RadioGroup>
          </ItemRow>
          <GroupHead $h={85}>
            <GroupTitle>DATA (1)</GroupTitle>
            <Notice>Data contained in the graph<br />will still be accessible.<Bracket /></Notice>
          </GroupHead>
          <ItemRow $h={52}>
            <IconSlot><TableIcon /></IconSlot>
            <NameField $w={237}>filename</NameField>
            <PencilIcon color={c.slate} />
            <RadioGroup><Radio /><Radio /><Radio $on /></RadioGroup>
          </ItemRow>
          <Footer>
            <ModalButton>CANCEL</ModalButton>
            <ModalButton $primary>SAVE</ModalButton>
          </Footer>
        </ModalBody>
      </Modal>

      <Messenger>
        <svg width="46" height="54" viewBox="0 0 46 54">
          <path d="M5 0H41Q46 0 46 5V53L32 47H5Q0 47 0 42V5Q0 0 5 0Z" fill="#fff" />
          <path d="M7 34Q23 45 39 34" fill="none" stroke="#457bdd" strokeWidth="3" strokeLinecap="round" />
        </svg>
      </Messenger>
    </Page>
  );
}
